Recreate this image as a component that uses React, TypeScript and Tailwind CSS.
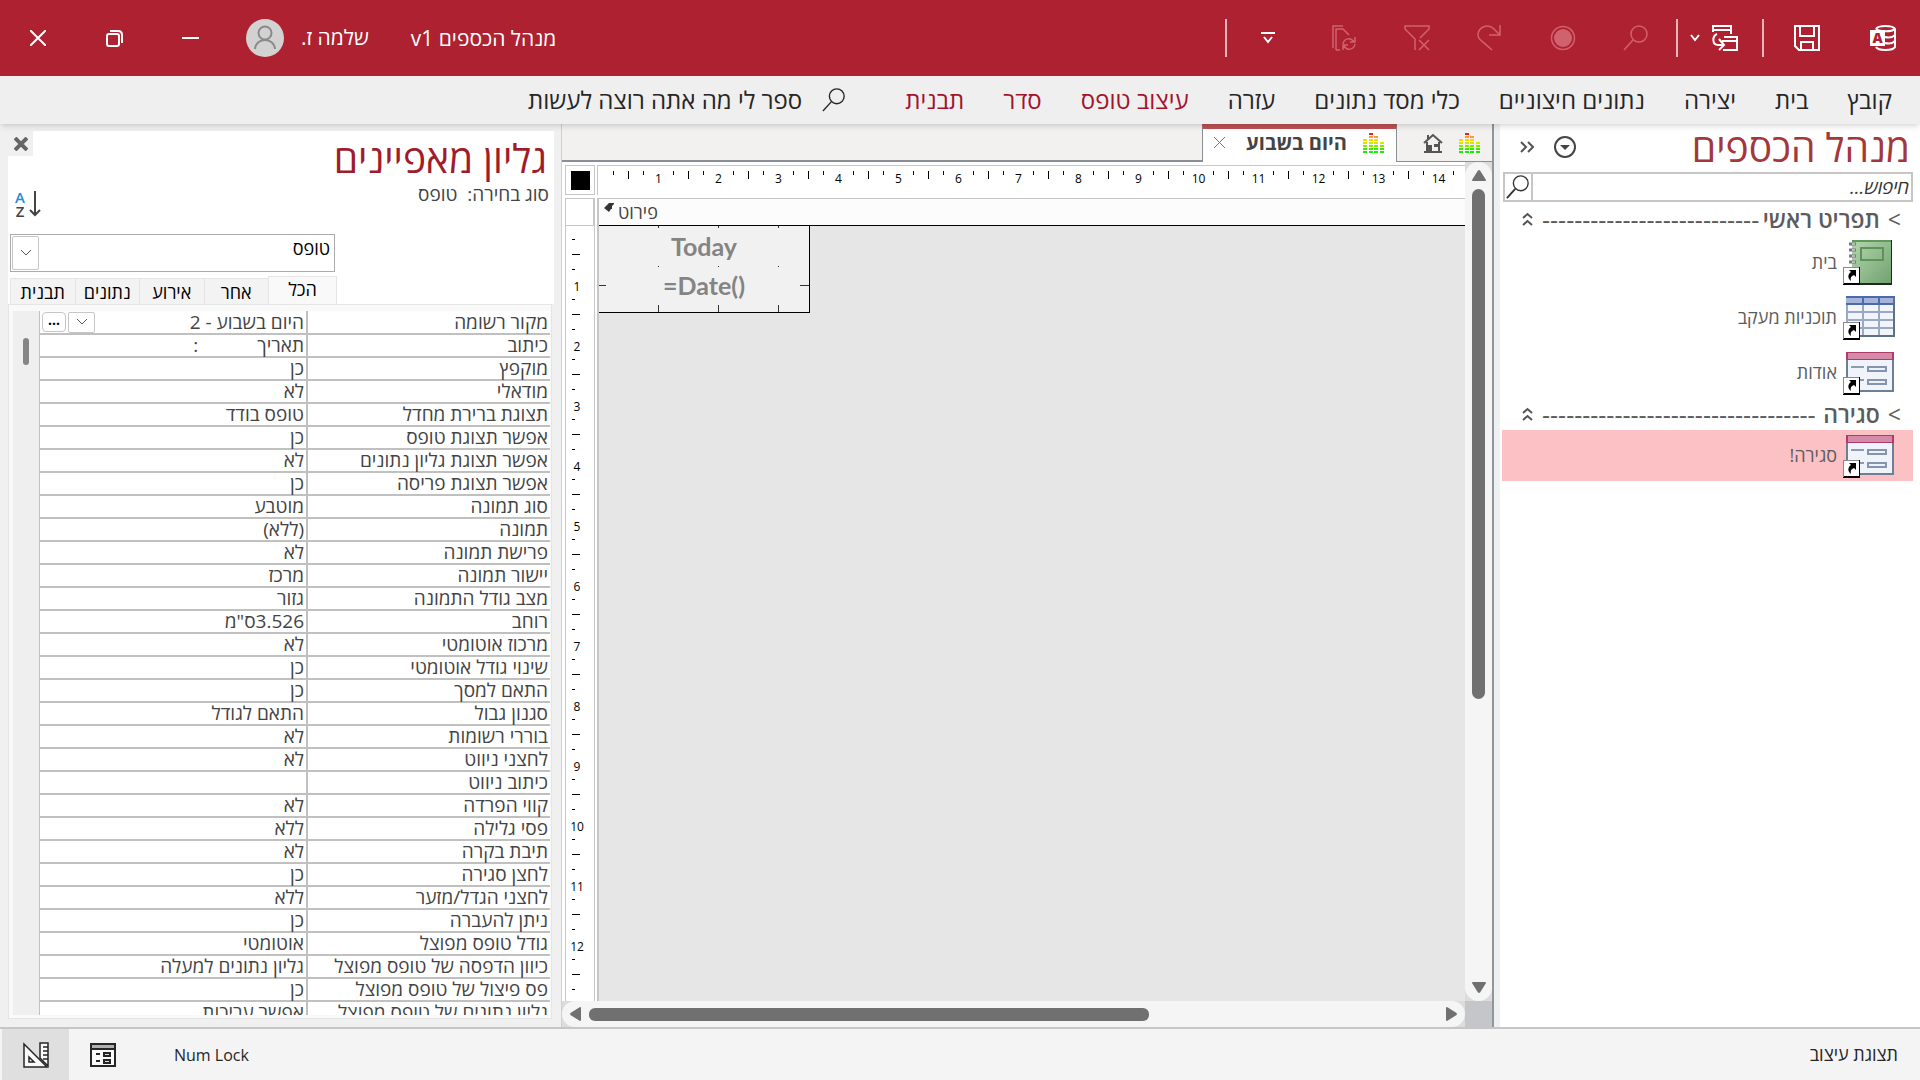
import type { ReactNode } from 'react';

const menuItems = [
    { label: 'קובץ', className: 'text-[#262626]' },
    { label: 'בית', className: 'text-[#262626]' },
    { label: 'יצירה', className: 'text-[#262626]' },
    { label: 'נתונים חיצוניים', className: 'text-[#262626]' },
    { label: 'כלי מסד נתונים', className: 'text-[#262626]' },
    { label: 'עזרה', className: 'text-[#262626]' },
    { label: 'עיצוב טופס', className: 'text-[#a4122b]' },
    { label: 'סדר', className: 'text-[#a4122b]' },
    { label: 'תבנית', className: 'text-[#a4122b]' },
];

const properties = [
    ['מקור רשומה', 'היום בשבוע - 2'],
    ['כיתוב', 'תאריך            :'],
    ['מוקפץ', 'כן'],
    ['מודאלי', 'לא'],
    ['תצוגת ברירת מחדל', 'טופס בודד'],
    ['אפשר תצוגת טופס', 'כן'],
    ['אפשר תצוגת גליון נתונים', 'לא'],
    ['אפשר תצוגת פריסה', 'כן'],
    ['סוג תמונה', 'מוטבע'],
    ['תמונה', '(ללא)'],
    ['פרישת תמונה', 'לא'],
    ['יישור תמונה', 'מרכז'],
    ['מצב גודל התמונה', 'גזור'],
    ['רוחב', '3.526ס"מ'],
    ['מרכוז אוטומטי', 'לא'],
    ['שינוי גודל אוטומטי', 'כן'],
    ['התאם למסך', 'כן'],
    ['סגנון גבול', 'התאם לגודל'],
    ['בוררי רשומות', 'לא'],
    ['לחצני ניווט', 'לא'],
    ['כיתוב ניווט', ''],
    ['קווי הפרדה', 'לא'],
    ['פסי גלילה', 'ללא'],
    ['תיבת בקרה', 'לא'],
    ['לחצן סגירה', 'כן'],
    ['לחצני הגדל/מזער', 'ללא'],
    ['ניתן להעברה', 'כן'],
    ['גודל טופס מפוצל', 'אוטומטי'],
    ['כיוון הדפסה של טופס מפוצל', 'גליון נתונים למעלה'],
    ['פס פיצול של טופס מפוצל', 'כן'],
    ['גליון נתונים של טופס מפוצל', 'אפשר עריכות'],
];

function Icon({ size = 26, children, className = '' }: { size?: number; children: ReactNode; className?: string }) {
    return (
        <svg width={size} height={size} viewBox="0 0 26 26" fill="none" stroke="currentColor" strokeWidth="2" className={`shrink-0 ${className}`}>
            {children}
        </svg>
    );
}

function Divider() {
    return <span className="h-[38px] w-[2px] shrink-0 bg-[#e6b5ba]" />;
}

function TitleBar() {
    return (
        <header className="flex h-[76px] shrink-0 items-center bg-[#ad2130] ps-6 pe-[30px] text-white">
            <div className="flex items-center">
                <button aria-label="Access">
                    <Icon>
                        <path d="M6 4c2-4 17-4 19 0v18c-2 4-17 4-19 0M6 4c3 3 16 3 19 0M15 12c4 1 8 0 10-2M15 18c4 1 8 0 10-2" />
                        <path d="M0 5h15v16H0z" fill="currentColor" stroke="none" />
                        <text x="7.500" y="18" textAnchor="middle" fontSize="14" fontWeight="800" fill="#ad2130" stroke="none">A</text>
                    </Icon>
                </button>
                <button aria-label="שמור" className="ms-[50px]">
                    <Icon>
                        <path d="M1 1h24v24H5l-4-4zM6 1v10h14V1M7 25v-8h12v8" />
                    </Icon>
                </button>
                <span className="w-[30px]" />
                <Divider />
                <button aria-label="תצוגה" className="ms-[24px] flex items-center gap-[12px]">
                    <Icon>
                        <path d="M1 7V1h18v8M1 5h18M12 12h13v13H11M10 16h15M5 9c-5 2-5 11 1 11h5M7 14l5 6-5 5" />
                    </Icon>
                    <svg width="10" height="8" viewBox="0 0 10 8" fill="none" stroke="currentColor" strokeWidth="2"><path d="m1 1 4 5 4-5" /></svg>
                </button>
                <span className="w-[12px]" />
                <Divider />
                <div className="ms-[27px] flex items-center gap-[47px] text-[#d0626e]">
                    <button aria-label="חיפוש">
                        <Icon><circle cx="16" cy="9" r="8" strokeWidth="1.500" /><path d="M10 15 1 25" strokeWidth="1.500" /></Icon>
                    </button>
                    <button aria-label="הקלט">
                        <Icon><circle cx="13" cy="13" r="11.500" strokeWidth="1.500" /><circle cx="13" cy="13" r="9" fill="currentColor" stroke="none" /></Icon>
                    </button>
                    <button aria-label="בצע שוב">
                        <Icon><path d="M23 0v10H12M23 10 17 4C11-2 1 2 1 10c0 4 3 5 14 15" strokeWidth="1.500" /></Icon>
                    </button>
                    <button aria-label="נקה סינון">
                        <Icon><path d="M11 25V14L1 4V1h24v3l-9 9M15 15l10 10M25 15 15 25" strokeWidth="1.500" /></Icon>
                    </button>
                    <button aria-label="רענן הכל">
                        <Icon><path d="M2 23V1h10M5 25V4h7l6 6M5 25h4M24 12v5h-5M23 17c-3-5-10-4-11 2M12 25v-5h5M13 21c3 5 10 4 11-2" strokeWidth="1.500" /></Icon>
                    </button>
                </div>
                <button aria-label="התאמה אישית" className="ms-[56px]">
                    <svg width="14" height="12" viewBox="0 0 14 12" fill="none" stroke="currentColor" strokeWidth="2"><path d="M0 1h14M3 5l4 5 4-5" /></svg>
                </button>
                <span className="w-[34px]" />
                <Divider />
            </div>
            <div className="flex-1" />
            <h1 className="text-[21px] leading-6">מנהל הכספים v1</h1>
            <button className="ms-[42px] flex items-center gap-[17px] text-[21px]">
                שלמה ז.
                <svg width="38" height="38" viewBox="0 0 38 38" fill="none" stroke="#8a8a8a" strokeWidth="2">
                    <circle cx="19" cy="19" r="19" fill="#d2d2d2" stroke="none" />
                    <circle cx="19" cy="14" r="6.500" />
                    <path d="M9 30c1-12 19-12 20 0" />
                </svg>
            </button>
            <button aria-label="מזער" className="ms-[47px]">
                <svg width="17" height="16" stroke="currentColor" strokeWidth="2"><path d="M0 8h17" /></svg>
            </button>
            <button aria-label="שחזר" className="ms-[59px]">
                <svg width="17" height="17" viewBox="0 0 17 17" fill="none" stroke="currentColor" strokeWidth="2">
                    <rect x="1" y="4" width="12" height="12" rx="2" />
                    <path d="M4 1h8q4 0 4 4v8" />
                </svg>
            </button>
            <button aria-label="סגור" className="ms-[60px]">
                <svg width="16" height="16" viewBox="0 0 16 16" stroke="currentColor" strokeWidth="2"><path d="m0 0 16 16M16 0 0 16" /></svg>
            </button>
        </header>
    );
}

function MenuBar() {
    return (
        <nav className="z-10 flex h-12 shrink-0 items-center gap-[39px] bg-[#efefef] ps-[28px] pb-px text-[24px] shadow-md">
            {menuItems.map((item) => (
                <button key={item.label} className={`whitespace-nowrap ${item.className}`}>{item.label}</button>
            ))}
            <button className="ms-[20px] flex items-center gap-[20px] whitespace-nowrap text-[#262626]">
                <Icon size={24}><circle cx="16" cy="9" r="8" strokeWidth="1.500" /><path d="M10 15 1 25" strokeWidth="1.500" /></Icon>
                ספר לי מה אתה רוצה לעשות
            </button>
        </nav>
    );
}

function ShortcutBadge() {
    return (
        <g transform="translate(0 27)">
            <path d="M0 0h17v18H0z" fill="#000" />
            <path d="M0 0h16v1H1v16H0z" fill="#8a8a8a" />
            <path d="M1 1h15v15H1z" fill="#fff" />
            <path d="M6 3h7v7l-2-2c-3 1-4 3-3 6-4-3-3-7 0-9z" fill="#000" />
        </g>
    );
}

function NotebookIcon() {
    return (
        <svg width="52" height="46" viewBox="0 0 52 46">
            <defs>
                <linearGradient id="cover" x1="0" y1="0" x2="1" y2="1">
                    <stop offset="0" stopColor="#b5d6b0" />
                    <stop offset="1" stopColor="#72a26f" />
                </linearGradient>
            </defs>
            <path d="M9 0h40v45H9z" fill="#1c2b1c" />
            <path d="M9 0h39v43H9z" fill="url(#cover)" />
            <path d="M9 1h39" stroke="#5f9a5b" strokeWidth="2" />
            <path d="M18 8h22v12H18z" fill="none" stroke="#5b9457" strokeWidth="2" />
            <path d="M6 4h7M6 10h7M6 16h7M6 22h7" stroke="#77787f" strokeWidth="3" />
            <path d="M9 4h3M9 10h3M9 16h3M9 22h3" stroke="#fff" />
            <ShortcutBadge />
        </svg>
    );
}

function TableIcon() {
    return (
        <svg width="52" height="46" viewBox="0 0 52 46">
            <path d="M3 2h49v40H3z" fill="#f1f4fb" />
            <path d="M3 2h49v8H3z" fill="#a5b5d9" />
            <path d="M3 2h49M3 9h49" stroke="#4b69ad" strokeWidth="2" />
            <path d="M3 17h49M3 25h49M3 33h49M4 10v32M20 10v32M36 10v32" stroke="#9aa9c2" strokeWidth="2" />
            <path d="M20 2v8M36 2v8" stroke="#4b69ad" strokeWidth="2" />
            <path d="M3 41h48V2" fill="none" stroke="#5d7088" strokeWidth="2" />
            <ShortcutBadge />
        </svg>
    );
}

function FormIcon() {
    return (
        <svg width="52" height="46" viewBox="0 0 52 46">
            <path d="M3 2h48v40H3z" fill="#f0f3fa" />
            <path d="M4 9v32h46V9" fill="none" stroke="#6b7f97" strokeWidth="2" />
            <path d="M3 2h48v8H3z" fill="#b13a6b" />
            <path d="M5 3h44v6H5z" fill="#d48aa9" />
            <path d="M8 17h13M12 30h9" stroke="#8c9cb3" strokeWidth="2" />
            <path d="M25 17h18v4H25zM25 30h18v4H25z" fill="#eef1f8" stroke="#8494ad" strokeWidth="2" />
            <ShortcutBadge />
        </svg>
    );
}

function NavGroup({ title, dashes }: { title: string; dashes: number }) {
    return (
        <button className="flex h-[30px] w-full items-center ps-[12px] pe-[20px] pb-[3px] text-[23px] leading-6 text-[#5c5c5c]">
            <span className="pe-2">&gt;</span>
            <span className="font-semibold whitespace-nowrap">{title}</span>
            <span className="flex-1" />
            <span className="pe-[9px] text-[25px] whitespace-nowrap">{'-'.repeat(dashes)}</span>
            <svg width="11" height="14" viewBox="0 0 11 14" fill="none" stroke="#555" strokeWidth="2"><path d="m1 6 4.500-4L10 6M1 13l4.500-4 4.500 4" /></svg>
        </button>
    );
}

function NavItem({ icon, label, selected = false }: { icon: ReactNode; label: string; selected?: boolean }) {
    return (
        <button className={`flex w-full items-center gap-[6px] ps-[18px] text-[18px] text-[#5c5c5c] ${selected ? 'h-[51px] bg-[#fcc1c4]' : 'h-[55px]'}`}>
            {icon}
            {label}
        </button>
    );
}

function NavigationPane() {
    return (
        <aside className="flex w-[428px] shrink-0 flex-col border-l-2 border-[#8f969c] bg-white">
            <div className="h-full border-l-[6px] border-[#eff0f2] ps-[7px] pe-[2px]">
                <div className="flex h-12 items-center pe-[18px] pb-[2px]">
                    <h2 className="ps-[3px] text-[39px] leading-[44px] text-[#a4373a]">מנהל הכספים</h2>
                    <div className="flex-1" />
                    <button aria-label="תפריט">
                        <svg width="22" height="22" viewBox="0 0 22 22"><circle cx="11" cy="11" r="10" fill="none" stroke="#444" strokeWidth="2" /><path d="M6 9h10l-5 5z" fill="#444" /></svg>
                    </button>
                    <button aria-label="כווץ" className="ms-[20px]">
                        <svg width="14" height="12" viewBox="0 0 14 12" fill="none" stroke="#555" strokeWidth="2"><path d="m1 1 5 5-5 5M8 1l5 5-5 5" /></svg>
                    </button>
                </div>
                <div className="me-px flex h-[30px] border-2 border-[#c6c6c6]">
                    <input aria-label="חיפוש" placeholder="חיפוש..." className="min-w-0 flex-1 ps-[2px] text-[19px] italic outline-none placeholder:text-[#333]" />
                    <button aria-label="חפש" className="flex w-[28px] items-center justify-center border-r-2 border-[#c6c6c6]">
                        <Icon size={24} className="text-[#333]"><circle cx="16" cy="9" r="8" strokeWidth="1.500" /><path d="M10 15 1 25" /></Icon>
                    </button>
                </div>
                <div className="pt-[3px]">
                    <NavGroup title="תפריט ראשי" dashes={27} />
                    <NavItem icon={<NotebookIcon />} label="בית" />
                    <NavItem icon={<TableIcon />} label="תוכניות מעקב" />
                    <NavItem icon={<FormIcon />} label="אודות" />
                    <NavGroup title="סגירה" dashes={34} />
                    <NavItem icon={<FormIcon />} label="סגירה!" selected />
                </div>
            </div>
        </aside>
    );
}

const barRows = [5, 7, 6, 4];
const rowColors = ['#14f000', '#30f000', '#8ae800', '#d8e800', '#ffd400', '#ff9a2e', '#f02020'];

function EqualizerIcon() {
    return (
        <svg width="22" height="22" viewBox="0 0 22 22">
            {barRows.map((rows, bar) =>
                rowColors.slice(0, rows).map((color, row) => (
                    <rect key={`${bar}-${row}`} x={bar * 6 - (bar > 1 ? 1 : 0)} y={19 - row * 3} width="4" height="2" fill={color} />
                )),
            )}
        </svg>
    );
}

function DocumentTabs() {
    return (
        <div className="flex h-[38px] shrink-0 bg-[#f3f1f0]">
            <button aria-label="בית" className="flex w-[95px] items-center gap-4 border-b border-[#8a8f96] ps-[11px]">
                <EqualizerIcon />
                <svg width="20" height="20" viewBox="0 0 20 20" fill="none" stroke="#555" strokeWidth="2">
                    <path d="m1 10 9-8 9 8M4 9v10h12V9M5 6V2" />
                    <path d="M1 19h18" />
                    <path d="M7 19v-7M13 11v3" strokeWidth="4" />
                </svg>
            </button>
            <div className="flex w-[195px] items-center border-x border-t-[5px] border-x-[#8a8f96] border-t-[#bd5054] bg-white ps-[11px] pe-[11px] pb-[6px]">
                <EqualizerIcon />
                <button className="ms-4 flex-1 text-start text-[20px] leading-6 font-bold whitespace-nowrap text-[#444]">היום בשבוע</button>
                <button aria-label="סגור כרטיסיה">
                    <svg width="11" height="11" viewBox="0 0 11 11" stroke="#777"><path d="m0 0 11 11M11 0 0 11" /></svg>
                </button>
            </div>
            <div className="flex-1 border-b-2 border-[#8a8f96]" />
        </div>
    );
}

const range = (count: number) => Array.from({ length: count }, (_, i) => i + 1);

function HorizontalRuler({ length }: { length: number }) {
    return (
        <div className="flex h-[30px] min-w-0 flex-1 overflow-hidden border-t border-l border-[#c6c6c6] bg-white ps-[8px] pt-[5px] text-[12px] leading-4 text-black">
            {range(length).map((cm) => (
                <div key={cm} className="flex shrink-0">
                    <span className="flex w-[15px] justify-center"><i className="h-[4px] w-px bg-black" /></span>
                    <span className="flex w-[15px] justify-center"><i className="h-[8px] w-px bg-black" /></span>
                    <span className="flex w-[15px] justify-center"><i className="h-[4px] w-px bg-black" /></span>
                    <span className="flex w-[15px] justify-center">{cm}</span>
                </div>
            ))}
            <span className="flex w-[15px] justify-center"><i className="h-[4px] w-px bg-black" /></span>
        </div>
    );
}

function VerticalRuler({ length }: { length: number }) {
    return (
        <div className="flex w-[30px] shrink-0 flex-col overflow-hidden border border-b-0 border-[#c6c6c6] bg-white text-[12px] leading-4 text-black">
            <div className="h-[27px] shrink-0 border-r border-b border-[#c6c6c6]" />
            <div className="min-h-0 flex-1 overflow-hidden ps-[6px] pt-[6px]">
                {range(length).map((cm) => (
                    <div key={cm}>
                        <span className="flex h-[15px] items-center"><i className="h-px w-[3px] bg-black" /></span>
                        <span className="flex h-[15px] items-center"><i className="h-px w-[8px] bg-black" /></span>
                        <span className="flex h-[15px] items-center"><i className="h-px w-[3px] bg-black" /></span>
                        <span className="flex h-[15px] w-[10px] items-start justify-center leading-5">{cm}</span>
                    </div>
                ))}
                <span className="flex h-[15px] items-center"><i className="h-px w-[3px] bg-black" /></span>
                <span className="flex h-[15px] items-center"><i className="h-px w-[8px] bg-black" /></span>
                <span className="flex h-[15px] items-center"><i className="h-px w-[3px] bg-black" /></span>
            </div>
        </div>
    );
}

function DesignSurface() {
    return (
        <div dir="ltr" className="flex min-h-0 min-w-0 flex-1 flex-col gap-[3px] overflow-hidden bg-white ps-[3px] pt-[3px]">
            <div className="flex gap-[2px]">
                <button aria-label="בחר טופס" className="flex size-[30px] items-center justify-center border border-[#c6c6c6]">
                    <span className="size-[19px] bg-black" />
                </button>
                <HorizontalRuler length={14} />
            </div>
            <div className="flex min-h-0 flex-1 gap-[2px]">
                <VerticalRuler length={12} />
                <div className="flex min-w-0 flex-1 flex-col border-t border-l-2 border-t-[#c6c6c6] border-l-[#c6c6c6]">
                    <div className="flex h-[27px] items-center border-b border-black bg-[#fcfcfc] ps-[5px] text-[18px] leading-6 text-[#444]">
                        <svg width="10" height="10" viewBox="0 0 10 10" className="mb-2 me-1"><path d="M0 5 5 0l5 0v1L8 3v3H7L5 9z" fill="#333" /></svg>
                        פירוט
                    </div>
                    <div className="flex-1 bg-[#e6e6e6]">
                        <div className="relative flex h-[87px] w-[211px] flex-col items-center border-r border-b border-black bg-[#f1f1f1] pt-px font-[Lato] text-[25px] leading-[39px] font-bold text-[#848484]">
                            <svg width="210" height="86" viewBox="0 0 210 86" stroke="#333" className="absolute inset-0">
                                <path d="M59.500 0v2M119.500 0v2M179.500 0v2M59.500 40v1M119.500 40v1M179.500 40v1M59.500 79v7M119.500 79v7M179.500 79v7M0 59.500h7M201 59.500h9" />
                            </svg>
                            <span>Today</span>
                            <span>=Date()</span>
                        </div>
                    </div>
                </div>
            </div>
        </div>
    );
}

function VerticalScrollbar() {
    return (
        <div className="w-[27px] shrink-0 bg-[#dcdcdc]">
            <div className="flex h-full flex-col items-center gap-2 rounded-full bg-[#f5f5f5] py-2">
                <svg width="14" height="11" viewBox="0 0 14 11"><path d="M7 0q1 0 2 2l5 8q0 1-1 1H1q-1 0-1-1l5-8q1-2 2-2z" fill="#707070" /></svg>
                <div className="w-[13px] flex-1"><div className="h-[65%] rounded-full bg-[#707070]" /></div>
                <svg width="14" height="11" viewBox="0 0 14 11"><path d="M7 11q-1 0-2-2L0 1q0-1 1-1h12q1 0 1 1L9 9q-1 2-2 2z" fill="#707070" /></svg>
            </div>
        </div>
    );
}

function HorizontalScrollbar() {
    return (
        <div dir="ltr" className="min-w-0 flex-1 bg-[#dcdcdc]">
            <div className="flex h-full items-center gap-2 rounded-full bg-[#f5f5f5] px-2">
                <svg width="11" height="14" viewBox="0 0 11 14"><path d="M0 7q0-1 2-2l8-5q1 0 1 1v12q0 1-1 1L2 9Q0 8 0 7z" fill="#707070" /></svg>
                <div className="h-[13px] flex-1"><div className="h-full w-[66%] rounded-md bg-[#707070]" /></div>
                <svg width="11" height="14" viewBox="0 0 11 14"><path d="M11 7q0-1-2-2L1 0Q0 0 0 1v12q0 1 1 1l8-5q2-1 2-2z" fill="#707070" /></svg>
            </div>
        </div>
    );
}

function Workspace() {
    return (
        <section className="flex min-w-0 flex-1 flex-col">
            <DocumentTabs />
            <div className="flex min-h-0 flex-1">
                <VerticalScrollbar />
                <DesignSurface />
            </div>
            <div className="flex h-[26px] shrink-0">
                <div className="w-[27px] bg-[#c5c6ca]" />
                <HorizontalScrollbar />
            </div>
        </section>
    );
}

function Chevron() {
    return <svg width="12" height="8" viewBox="0 0 12 8" fill="none" stroke="#555"><path d="m1 1 5 5 5-5" /></svg>;
}

function PropertySheet() {
    return (
        <aside className="flex w-[562px] shrink-0 flex-col border-r border-[#d0d0d0] bg-[#f0f0f0] ps-[7px] pe-2 pt-[7px] pb-2">
            <div className="bg-white">
                <div className="flex h-[103px]">
                    <div className="flex-1 ps-[5px]">
                        <h2 className="ps-[2px] pt-1 text-[39px] leading-[46px] text-[#a01c2c]">גליון מאפיינים</h2>
                        <p className="pt-px text-[19px] leading-6 whitespace-pre text-[#444]">סוג בחירה:  טופס</p>
                    </div>
                    <div className="flex flex-col items-end">
                        <button aria-label="סגור" className="flex h-[25px] w-[25px] items-center justify-center bg-[#f0f0f0]">
                            <svg width="14" height="14" viewBox="0 0 14 14" stroke="#666" strokeWidth="4"><path d="m1 1 12 12M13 1 1 13" /></svg>
                        </button>
                        <button aria-label="מיון" dir="ltr" className="mt-[34px] ml-[7px] flex items-center gap-1">
                            <span className="flex w-[10px] flex-col text-[15px] leading-[14px] font-semibold text-[#444]">
                                <span className="text-[#2a8dd4]">A</span>
                                <span>Z</span>
                            </span>
                            <svg width="12" height="28" viewBox="0 0 12 28" fill="none" stroke="#444" strokeWidth="2"><path d="M6 1v24M1 20l5 5 5-5" /></svg>
                        </button>
                    </div>
                </div>
                <div className="relative ml-[2px] mr-[219px] h-[38px]">
                    <select aria-label="סוג בחירה" className="h-full w-full appearance-none border border-[#ababab] bg-white ps-[4px] pb-[10px] text-[18px] leading-6 text-black">
                        <option>טופס</option>
                    </select>
                    <span className="pointer-events-none absolute top-[2px] bottom-[2px] left-[2px] flex w-[27px] items-center justify-center rounded-xs border border-[#c6c6c6] bg-white"><Chevron /></span>
                </div>
                <div className="ml-[2px] mr-[217px] flex h-[32px] items-end pt-[4px] text-[18px] leading-5 text-black">
                    <button className="h-[28px] w-[69px] border border-b-0 border-[#e5e5e5] bg-[#f9f9f9] pb-1">הכל</button>
                    {['אחר', 'אירוע', 'נתונים', 'תבנית'].map((tab) => (
                        <button key={tab} className="h-[26px] flex-1 border border-r-0 border-b-0 border-[#e5e5e5] bg-[#f3f3f3]">{tab}</button>
                    ))}
                </div>
            </div>
            <div className="mr-[2px] flex min-h-0 flex-1 border border-[#e5e5e5] bg-[#f9f9f9] pt-[6px] pr-[1px] pb-[3px] pl-[4px]">
                <div className="h-full min-w-0 flex-1 overflow-hidden">
                    <table className="w-full table-fixed border-collapse border-l border-[#c0c0c0] bg-white text-[19px] leading-[21px] text-[#444]">
                        <tbody>
                            {properties.map(([name, value], i) => (
                                <tr key={name} className="h-[23px] border-b-2 border-[#c0c0c0]">
                                    <th className="w-[243px] border-l-2 border-[#c0c0c0] p-0 ps-[2px] text-start font-normal whitespace-nowrap">{name}</th>
                                    <td className="p-0 ps-[2px] whitespace-pre">
                                        {i === 0 ? (
                                            <div className="flex items-center justify-between pe-[2px]">
                                                {value}
                                                <span className="flex gap-[2px]">
                                                    <button aria-label="בחר מקור" className="flex h-[21px] w-[27px] items-center justify-center rounded-xs border border-[#c6c6c6]"><Chevron /></button>
                                                    <button aria-label="בונה" className="flex h-[20px] w-[24px] items-center justify-center rounded border border-[#c6c6c6] pb-1 text-[14px] leading-none font-bold text-black">...</button>
                                                </span>
                                            </div>
                                        ) : value}
                                    </td>
                                </tr>
                            ))}
                        </tbody>
                    </table>
                </div>
                <div className="w-[26px] shrink-0 bg-[#efefef] pt-[27px]">
                    <div className="mx-auto h-[27px] w-[6px] rounded-full bg-[#868686]" />
                </div>
            </div>
        </aside>
    );
}

function StatusBar() {
    return (
        <footer className="flex h-[53px] shrink-0 items-center border-t-2 border-[#c6c6c6] bg-[#f4f4f4] ps-[22px] pe-[2px] text-[18px] text-[#262626]">
            <span>תצוגת עיצוב</span>
            <div className="flex-1" />
            <span dir="ltr" className="text-[16px]">Num Lock</span>
            <button aria-label="תצוגת טופס" className="ms-[58px]">
                <Icon>
                    <path d="M1 2h24v22H1z" fill="#fafafa" />
                    <path d="M2 3h22v4H2z" fill="#b0b0b0" stroke="none" />
                    <path d="M0 7h26M6 12h4M6 19h4" />
                    <path d="M14 11h6v3h-6zM14 18h6v3h-6z" fill="#ddd" />
                </Icon>
            </button>
            <button aria-label="תצוגת עיצוב" className="ms-[21px] flex h-full w-[67px] items-center justify-center bg-[#dfdfdf]">
                <Icon>
                    <path d="M17 16V1h8v23z" fill="#fafafa" strokeWidth="1.500" />
                    <path d="M1 2v23h23z" fill="#fafafa" strokeWidth="1.500" />
                    <path d="M6 15v5h5zM20 5h5M20 9h5M20 13h5M20 17h5" strokeWidth="1.500" />
                </Icon>
            </button>
        </footer>
    );
}

export default function App() {
    return (
        <div dir="rtl" className="flex h-screen flex-col overflow-hidden bg-[#f0f0f0] font-['Open_Sans','Liberation_Sans',sans-serif]">
            <TitleBar />
            <MenuBar />
            <main className="flex min-h-0 flex-1">
                <NavigationPane />
                <Workspace />
                <PropertySheet />
            </main>
            <StatusBar />
        </div>
    );
}
